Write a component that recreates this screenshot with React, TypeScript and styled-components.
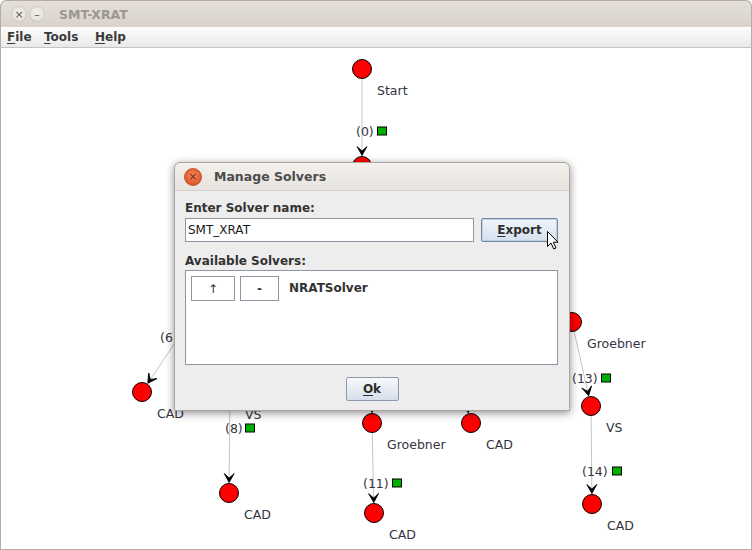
import React from "react";
import styled, { createGlobalStyle } from "styled-components";

const Global = createGlobalStyle`
  html, body { margin: 0; padding: 0; background: #ffffff; }
  body { font-family: "DejaVu Sans", "Liberation Sans", sans-serif; }
  * { box-sizing: border-box; }
`;

const Window = styled.div`
  position: relative;
  width: 752px;
  height: 550px;
  display: flex;
  flex-direction: column;
  overflow: hidden;
`;

const TitleBar = styled.div`
  height: 27px;
  flex: none;
  display: flex;
  align-items: center;
  padding-left: 10px;
  gap: 2px;
  background: linear-gradient(#e4dfd9, #d8d2cb);
  border: 1px solid #b4aca3;
  border-bottom: none;
  border-radius: 6px 6px 0 0;
`;

const WinButton = styled.div`
  width: 16px;
  height: 16px;
  border-radius: 50%;
  background: radial-gradient(circle at 50% 40%, #f1eeea, #e2ddd7);
  border: 1px solid #cfc8c0;
  display: flex;
  align-items: center;
  justify-content: center;
  color: #5c5853;
  font-size: 11px;
  line-height: 1;
  font-family: "DejaVu Sans", sans-serif;
`;

const WinTitle = styled.div`
  margin-left: 12px;
  font-size: 12.5px;
  font-weight: bold;
  color: #9c968f;
`;

const MenuBar = styled.div`
  height: 21px;
  flex: none;
  display: flex;
  align-items: center;
  padding-left: 6px;
  background: linear-gradient(#fdfdfd, #e9e9e9);
  border-left: 1px solid #b4aca3;
  border-right: 1px solid #b4aca3;
  border-bottom: 1px solid #c4c4c4;
`;

const MenuItem = styled.div<{ $w?: number }>`
  width: ${(p) => (p.$w ? `${p.$w}px` : "auto")};
  font-size: 12px;
  font-weight: bold;
  color: #3a3a3a;
`;

const Mn = styled.span`
  text-decoration: underline;
  text-underline-offset: 2px;
`;

const Canvas = styled.div`
  flex: 1;
  background: #ffffff;
  border-left: 1px solid #b4aca3;
  border-right: 1px solid #b4aca3;
  border-bottom: 1px solid #b4aca3;
`;

const GraphSvg = styled.svg`
  display: block;
  font-family: "DejaVu Sans", "Liberation Sans", sans-serif;
  font-size: 12.5px;
`;

const EdgeLine = styled.line`
  stroke: #c4c4c4;
  stroke-width: 1;
`;

const Arrow = styled.path`
  fill: #000;
  stroke: #000;
  stroke-width: 0.8;
  stroke-linejoin: miter;
`;

const NodeCircle = styled.circle`
  fill: #ff0000;
  stroke: #000;
  stroke-width: 1;
`;

const Label = styled.text`
  fill: #343440;
`;

const Marker = styled.rect`
  fill: #00b000;
  stroke: #000;
  stroke-width: 1;
`;

/* ---------- Dialog ---------- */

const Dialog = styled.div`
  position: absolute;
  left: 174px;
  top: 162px;
  width: 396px;
  height: 249px;
  display: flex;
  flex-direction: column;
  background: #ededed;
  border: 1px solid #aaa49e;
  border-radius: 6px 6px 0 0;
  box-shadow: 0 2px 8px rgba(0, 0, 0, 0.45);
`;

const DialogTitle = styled.div`
  height: 28px;
  flex: none;
  display: flex;
  align-items: center;
  padding-left: 9px;
  gap: 12px;
  background: linear-gradient(#f3f0ed, #e7e3de);
  border-bottom: 1px solid #d6d1cb;
  border-radius: 6px 6px 0 0;
`;

const CloseDot = styled.div`
  width: 18px;
  height: 18px;
  border-radius: 50%;
  background: radial-gradient(circle at 50% 40%, #f58a5c, #e0582c 70%, #cf4d26);
  border: 1px solid #c2532f;
  display: flex;
  align-items: center;
  justify-content: center;
  color: #6a2614;
  font-size: 10px;
  line-height: 1;
`;

const DialogTitleText = styled.div`
  font-size: 12.5px;
  font-weight: bold;
  color: #4c4c4c;
`;

const Body = styled.div`
  flex: 1;
  display: flex;
  flex-direction: column;
  padding: 9px 11px 9px 10px;
`;

const FieldLabel = styled.div<{ $mt?: number }>`
  margin-top: ${(p) => p.$mt ?? 0}px;
  height: 16px;
  line-height: 16px;
  font-size: 12px;
  font-weight: bold;
  color: #333333;
`;

const Row = styled.div`
  margin-top: 2px;
  display: flex;
  gap: 7px;
  height: 24px;
`;

const TextField = styled.input`
  flex: 1;
  height: 24px;
  border: 1px solid #8c97a3;
  background: #ffffff;
  padding: 0 2px;
  font-family: "DejaVu Sans", sans-serif;
  font-size: 12px;
  color: #1a1a1a;
  outline: none;
`;

const Button = styled.div<{ $w: number; $focus?: boolean }>`
  width: ${(p) => p.$w}px;
  height: 24px;
  display: flex;
  align-items: center;
  justify-content: center;
  font-size: 12px;
  font-weight: bold;
  color: #2e2e2e;
  border: 1px solid ${(p) => (p.$focus ? "#7588a2" : "#8d9aac")};
  border-radius: 2px;
  background: ${(p) =>
    p.$focus
      ? "linear-gradient(#f0f4f9, #d5e1ee)"
      : "linear-gradient(#f7f9fb, #d6dfea)"};
  box-shadow: ${(p) => (p.$focus ? "inset 0 0 0 1px #bcd0e6" : "none")};
`;

const List = styled.div`
  margin-top: 1px;
  flex: 1;
  background: #ffffff;
  border: 1px solid #8c97a3;
  padding: 5px;
  display: flex;
  align-items: flex-start;
  gap: 5px;
`;

const SmallButton = styled.div<{ $w: number; $thin?: boolean }>`
  width: ${(p) => p.$w}px;
  height: 25px;
  display: flex;
  align-items: center;
  justify-content: center;
  background: #ffffff;
  border: 1px solid #8c97a3;
  font-size: 12px;
  font-weight: ${(p) => (p.$thin ? "normal" : "bold")};
  color: #33334a;
`;

const SolverName = styled.div`
  margin-left: 5px;
  height: 25px;
  line-height: 25px;
  font-size: 12px;
  font-weight: bold;
  color: #333333;
`;

const Footer = styled.div`
  margin-top: 12px;
  display: flex;
  justify-content: center;
  padding-left: 1px;
`;

const Cursor = styled.svg`
  position: absolute;
  left: 547px;
  top: 231px;
`;

/* ---------- graph data ---------- */

type Pt = [number, number];
type Node = { p: Pt; label?: string };
type Edge = { a: Pt; b: Pt; label?: string; lx?: number; ly?: number; mx?: number };

const N1: Pt = [362, 69];
const N2: Pt = [362, 166];
const P6: Pt = [229, 262];
const PVS: Pt = [230, 393];
const PMID: Pt = [372, 330];
const PR: Pt = [440, 300];
const G1: Pt = [372, 423];
const C3: Pt = [374, 513];
const C4: Pt = [471, 423];
const G2: Pt = [572, 322];
const V2: Pt = [591, 406];
const C5: Pt = [592, 504];
const C1: Pt = [142, 392];
const C2: Pt = [229, 493];

const nodes: Node[] = [
  { p: N1, label: "Start" },
  { p: N2 },
  { p: P6 },
  { p: PMID },
  { p: PR },
  { p: C1, label: "CAD" },
  { p: PVS, label: "VS" },
  { p: C2, label: "CAD" },
  { p: G1, label: "Groebner" },
  { p: C3, label: "CAD" },
  { p: C4, label: "CAD" },
  { p: G2, label: "Groebner" },
  { p: V2, label: "VS" },
  { p: C5, label: "CAD" },
];

const edges: Edge[] = [
  { a: N1, b: N2, label: "(0)", lx: 356, ly: 131, mx: 377 },
  { a: N2, b: P6 },
  { a: N2, b: PMID },
  { a: N2, b: PR },
  { a: N2, b: G2 },
  { a: P6, b: C1, label: "(6)", lx: 160, ly: 337, mx: 183 },
  { a: P6, b: PVS },
  { a: PVS, b: C2, label: "(8)", lx: 225, ly: 428, mx: 245 },
  { a: PMID, b: G1 },
  { a: PR, b: C4 },
  { a: G1, b: C3, label: "(11)", lx: 363, ly: 483, mx: 392 },
  { a: G2, b: V2, label: "(13)", lx: 572, ly: 378, mx: 601 },
  { a: V2, b: C5, label: "(14)", lx: 582, ly: 471, mx: 612 },
];

function EdgeView({ e }: { e: Edge }) {
  const dx = e.b[0] - e.a[0];
  const dy = e.b[1] - e.a[1];
  const len = Math.hypot(dx, dy);
  const ux = dx / len;
  const uy = dy / len;
  const tx = e.b[0] - 10 * ux;
  const ty = e.b[1] - 10 * uy;
  const ang = (Math.atan2(-ux, uy) * 180) / Math.PI;
  return (
    <g>
      <EdgeLine x1={e.a[0]} y1={e.a[1]} x2={tx} y2={ty} />
      <Arrow d="M0,-0.5 L-5,-9.5 L0,-5 L5,-9.5 Z" transform={`translate(${tx},${ty}) rotate(${ang})`} />
      {e.label && (
        <>
          <Label x={e.lx} y={(e.ly ?? 0) + 4.5}>
            {e.label}
          </Label>
          <Marker x={(e.mx ?? 0) + 0.5} y={(e.ly ?? 0) - 4} width={9} height={8} />
        </>
      )}
    </g>
  );
}

export default function App() {
  return (
    <>
      <Global />
      <Window>
        <TitleBar>
          <WinButton>×</WinButton>
          <WinButton>–</WinButton>
          <WinTitle>SMT-XRAT</WinTitle>
        </TitleBar>
        <MenuBar>
          <MenuItem $w={37}>
            <Mn>F</Mn>ile
          </MenuItem>
          <MenuItem $w={51}>
            <Mn>T</Mn>ools
          </MenuItem>
          <MenuItem>
            <Mn>H</Mn>elp
          </MenuItem>
        </MenuBar>
        <Canvas>
          <GraphSvg width={750} height={501} viewBox="1 48 750 501">
            {edges.map((e, i) => (
              <EdgeView key={i} e={e} />
            ))}
            {nodes.map((n, i) => (
              <g key={i}>
                <NodeCircle cx={n.p[0]} cy={n.p[1]} r={9.5} />
                {n.label && (
                  <Label x={n.p[0] + 15} y={n.p[1] + 26}>
                    {n.label}
                  </Label>
                )}
              </g>
            ))}
          </GraphSvg>
        </Canvas>

        <Dialog>
          <DialogTitle>
            <CloseDot>×</CloseDot>
            <DialogTitleText>Manage Solvers</DialogTitleText>
          </DialogTitle>
          <Body>
            <FieldLabel>Enter Solver name:</FieldLabel>
            <Row>
              <TextField defaultValue="SMT_XRAT" readOnly />
              <Button $w={77} $focus>
                <Mn>E</Mn>xport
              </Button>
            </Row>
            <FieldLabel $mt={11}>Available Solvers:</FieldLabel>
            <List>
              <SmallButton $w={44} $thin>
                ↑
              </SmallButton>
              <SmallButton $w={39}>-</SmallButton>
              <SolverName>NRATSolver</SolverName>
            </List>
            <Footer>
              <Button $w={53}>
                <Mn>O</Mn>k
              </Button>
            </Footer>
          </Body>
        </Dialog>

        <Cursor width="13" height="19" viewBox="0 0 13 19">
          <path
            d="M0.5,0.5 L0.5,15.5 L4,12 L6.8,18 L9,17 L6.3,11.2 L11,11.2 Z"
            fill="#ffffff"
            stroke="#000000"
            strokeWidth="1"
            strokeLinejoin="miter"
          />
        </Cursor>
      </Window>
    </>
  );
}
